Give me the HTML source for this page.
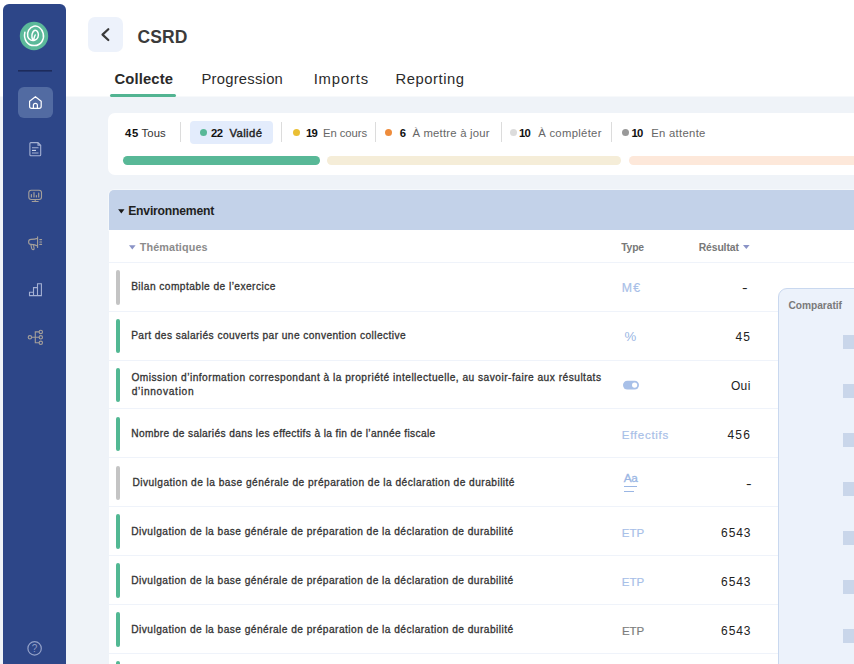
<!DOCTYPE html><html lang="fr"><head><meta charset="utf-8"><title>CSRD</title><style>
*{box-sizing:border-box;margin:0;padding:0}
html,body{width:854px;height:664px;overflow:hidden}
body{background:#eff3f8;font-family:"Liberation Sans",sans-serif;position:relative;color:#333}
.abs{position:absolute}
.t{position:absolute;white-space:nowrap;line-height:1}
#hdr{left:0;top:0;width:854px;height:97px;background:linear-gradient(#fff 96px,#f7f9fb 96px)}
#side{left:3px;top:4px;width:63px;height:670px;background:#2d4688;border-radius:6px}
#back{left:88px;top:17px;width:34.5px;height:34.5px;border-radius:7px;background:#edf2fb}
#ul{left:109.5px;top:93.5px;width:66.5px;height:3px;border-radius:2px;background:#52b492}
#card{left:108.3px;top:113.2px;width:760px;height:61.8px;border-radius:7px;background:#fff}
.sep{width:1px;top:122px;height:19.5px;background:#dcdcdc}
.dot{width:7px;height:7px;border-radius:50%;top:129px}
.bar{top:155.8px;height:8.8px;border-radius:4.4px}
#sec{left:109px;top:190px;width:760px;height:39.8px;background:#c3d2e9;border-radius:5px 0 0 0;box-shadow:0 0 0 1px rgba(255,255,255,.4)}
#tbl{left:108.5px;top:230px;width:760px;height:440px;background:#fff}
.row{position:absolute;left:108.5px;width:760px;height:49px;border-top:1px solid #eff3fa}
.lb{position:absolute;left:116px;width:3.8px;height:34.6px;border-radius:2px}
#cmp{left:778.3px;top:288px;width:90px;height:400px;background:#ecf2fb;border:1px solid #c9d8ef;border-radius:9px 0 0 0}
.sq{left:842.5px;width:14px;height:14px;background:#c9d6ea}
</style></head><body>
<div id="hdr" class="abs"></div>
<div id="side" class="abs"></div>
<svg class="abs" style="left:0;top:0" width="70" height="664" viewBox="0 0 70 664" fill="none">
<circle cx="34" cy="36" r="14.2" fill="#5bb99a"/>
<path d="M24.9 32.2C23.2 39.5 27.5 45.8 34.5 45.6C41 45.4 44.6 39.5 43.2 33.5C41.9 28 37.6 25.4 33.8 26.2C29.5 27.1 26.6 32.5 27.7 36.5C28.6 39.7 31.8 41 34.6 40.2C37.6 39.3 39.2 36.3 38.1 33C37.3 30.7 35.6 29.8 34.4 30.5C32.5 31.6 31.5 35 32 37.5C32.3 39 32.9 39.9 33.6 40.2C33.9 38.2 34.4 36.4 35.2 35" stroke="#fff" stroke-width="1.5" stroke-linecap="round" stroke-linejoin="round"/>
<rect x="18" y="70" width="34" height="1.6" fill="#1d2b5b"/>
<rect x="18" y="87" width="35" height="31" rx="6" fill="#526ba2"/>
<path d="M29.6 101.2L35.4 96.7L41.2 101.2V106.2Q41.2 108.3 39.1 108.3H31.7Q29.6 108.3 29.6 106.2Z M33.4 108.3V105.3Q33.4 103.3 35.4 103.3Q37.4 103.3 37.4 105.3V108.3" stroke="#fff" stroke-width="1.2" stroke-linejoin="round"/>
<g stroke="#a5b1d3" stroke-width="1.1">
<path d="M29.9 143.6Q29.9 142.6 30.9 142.6H38L40.7 145.3V154.7Q40.7 155.7 39.7 155.7H30.9Q29.9 155.7 29.9 154.7Z M38 142.6V145.3H40.7"/>
<path d="M32 147.8H38.5M32 153H38.5"/><path d="M32 150.4H36" stroke="#d5dcee"/>
<path d="M29.5 292.3H33.5V295.6H29.5Z M33.5 287.6H37.5V295.6H33.5Z M37.5 283.7H41.4V295.6H37.5Z"/>
</g>
<g stroke="#a49f9a" stroke-width="1.1" stroke-linecap="round">
<rect x="28.8" y="190.2" width="12.7" height="9.3" rx="2.4"/><path d="M35.2 199.5V201.5M32.2 201.5H38.2"/>
<path d="M31.4 194.5V197M34 192.6V197M36.4 195.6V197M38.7 193.2V197" stroke-width="1.2"/>
<path d="M37.6 236.8V247.4M37.6 238.2C35.5 239.2 33.5 239.4 31 239.4Q28.6 239.4 28.6 241.9Q28.6 244.4 31 244.4C33.5 244.4 35.5 244.6 37.6 246M30.8 244.6L31.8 248.6Q32.2 249.8 33.3 249.6Q34.4 249.3 34.1 248.1L33.3 244.6M39.8 239.6H41.6M39.8 242H41.6M39.8 244.4H41.6"/>
<circle cx="29.9" cy="337.3" r="1.7"/><circle cx="40.8" cy="331.9" r="1.7"/><circle cx="40.8" cy="337.3" r="1.7"/><circle cx="40.8" cy="342.8" r="1.7"/>
<path d="M31.6 337.3H39.1M39.1 331.9H35.3V342.8H39.1"/>
</g>
<circle cx="34.6" cy="648.4" r="6.7" stroke="#94a2c9" stroke-width="1.2"/>
</svg>

<span class="t" style="left:31.7px;top:643.6px;font-size:10px;color:#8d9bc4">?</span>
<div id="back" class="abs"></div>
<svg class="abs" style="left:88px;top:17px" width="35" height="35" viewBox="0 0 35 35" fill="none"><path d="M20.3 12.2L14.5 17.6L20.3 23" stroke="#3a3a3a" stroke-width="2.2" stroke-linecap="round" stroke-linejoin="round"/></svg>
<span id="t1" class="t" style="left:137.40px;top:29px;font-size:17.5px;font-weight:700;color:#3b3b3b;letter-spacing:0.167px;">CSRD</span>
<span id="t2" class="t" style="left:114.40px;top:72px;font-size:14.8px;font-weight:700;color:#2a2a2a;letter-spacing:0.143px;">Collecte</span>
<span id="t3" class="t" style="left:201.40px;top:72px;font-size:14.8px;color:#2b2b2b;letter-spacing:0.250px;">Progression</span>
<span id="t4" class="t" style="left:313.65px;top:72px;font-size:14.8px;color:#2b2b2b;letter-spacing:0.867px;">Imports</span>
<span id="t5" class="t" style="left:395.40px;top:72px;font-size:14.8px;color:#2b2b2b;letter-spacing:0.562px;">Reporting</span>
<div id="ul" class="abs"></div>
<div id="card" class="abs"></div>
<div class="abs" style="left:190px;top:120.8px;width:82.5px;height:23.7px;border-radius:4px;background:#e3ecfc"></div>
<span id="t6" class="t" style="left:124.90px;top:128px;font-size:11.3px;font-weight:700;color:#111;letter-spacing:0.750px;">45</span>
<span id="t7" class="t" style="left:141.40px;top:128px;font-size:11.3px;color:#333;letter-spacing:0.167px;">Tous</span>
<div class="abs sep" style="left:180px"></div>
<div class="abs sep" style="left:281.3px"></div>
<div class="abs sep" style="left:374.8px"></div>
<div class="abs sep" style="left:500.8px"></div>
<div class="abs sep" style="left:610.8px"></div>
<div class="abs dot" style="left:200.3px;background:#58b897"></div>
<div class="abs dot" style="left:293.4px;background:#eabf34"></div>
<div class="abs dot" style="left:385.2px;background:#ee8c3c"></div>
<div class="abs dot" style="left:509.7px;background:#dcdcdc"></div>
<div class="abs dot" style="left:621.7px;background:#999"></div>
<span id="t8" class="t" style="left:210.90px;top:128px;font-size:11.3px;font-weight:700;color:#111;letter-spacing:-0.500px;">22</span>
<span id="t9" class="t" style="left:229.40px;top:128px;font-size:11.3px;color:#222;letter-spacing:0.400px;-webkit-text-stroke:.4px #222;">Validé</span>
<span id="t10" class="t" style="left:305.90px;top:128px;font-size:11.3px;font-weight:700;color:#111;letter-spacing:-0.550px;">19</span>
<span id="t11" class="t" style="left:322.90px;top:128px;font-size:11.3px;color:#666;letter-spacing:-0.036px;">En cours</span>
<span id="t12" class="t" style="left:399.65px;top:128px;font-size:11.3px;font-weight:700;color:#111;">6</span>
<span id="t13" class="t" style="left:412.40px;top:128px;font-size:11.3px;color:#666;letter-spacing:0.214px;">À mettre à jour</span>
<span id="t14" class="t" style="left:518.90px;top:128px;font-size:11.3px;font-weight:700;color:#111;letter-spacing:-0.550px;">10</span>
<span id="t15" class="t" style="left:538.15px;top:128px;font-size:11.3px;color:#666;letter-spacing:0.300px;">À compléter</span>
<span id="t16" class="t" style="left:631.40px;top:128px;font-size:11.3px;font-weight:700;color:#111;letter-spacing:-0.550px;">10</span>
<span id="t17" class="t" style="left:651.15px;top:128px;font-size:11.3px;color:#666;letter-spacing:0.306px;">En attente</span>
<div class="abs bar" style="left:123.2px;width:197.3px;background:#58b897"></div>
<div class="abs bar" style="left:327px;width:294.3px;background:#f5edd8"></div>
<div class="abs bar" style="left:629px;width:260px;background:#fde8da"></div>
<div id="sec" class="abs"></div>
<svg class="abs" style="left:118px;top:208.5px" width="8" height="6"><path d="M0.1 0.2H6.5L3.3 4.4Z" fill="#1a1a1a"/></svg>
<span id="t18" class="t" style="left:128.20px;top:205px;font-size:12.2px;font-weight:700;color:#1f1f1f;letter-spacing:-0.217px;">Environnement</span>
<div id="tbl" class="abs"></div>
<svg class="abs" style="left:128.5px;top:245px" width="8" height="6"><path d="M0 0.2H6.6L3.3 4.4Z" fill="#8a93c6"/></svg>
<span id="t19" class="t" style="left:139.75px;top:242px;font-size:10.8px;font-weight:700;color:#8b8b8b;letter-spacing:0.120px;">Thématiques</span>
<span id="t20" class="t" style="left:621.15px;top:243px;font-size:10.4px;font-weight:700;color:#787878;letter-spacing:-0.167px;">Type</span>
<span id="t21" class="t" style="left:698.65px;top:243px;font-size:10.4px;font-weight:700;color:#787878;letter-spacing:-0.107px;">Résultat</span>
<svg class="abs" style="left:743px;top:245.4px" width="8" height="6"><path d="M0 0.1H6.6L3.3 4.1Z" fill="#8a93c6"/></svg>
<div class="row" style="top:261.80px"></div><div class="lb" style="top:270.00px;background:#c4c4c4"></div>
<span id="t22" class="t" style="left:131.15px;top:282px;font-size:10.2px;color:#333;letter-spacing:0.438px;-webkit-text-stroke:.3px #333;">Bilan comptable de l’exercice</span>
<span id="t23" class="t" style="left:621.77px;top:282px;font-size:12.3px;color:#a8c0e8;letter-spacing:1.200px;-webkit-text-stroke:.2px #a8c0e8;">M€</span>
<span id="t24" class="t" style="left:741.90px;top:282px;font-size:12px;color:#222;transform:scaleX(1.4);transform-origin:0 0;">-</span>
<div class="row" style="top:310.67px"></div><div class="lb" style="top:318.88px;background:#52b893"></div>
<span id="t25" class="t" style="left:131.15px;top:331px;font-size:10.2px;color:#333;letter-spacing:0.419px;-webkit-text-stroke:.3px #333;">Part des salariés couverts par une convention collective</span>
<span id="t26" class="t" style="left:624.45px;top:330px;font-size:13.2px;color:#9bb7e4;">%</span>
<span id="t27" class="t" style="left:735.60px;top:331px;font-size:12px;color:#222;letter-spacing:0.950px;">45</span>
<div class="row" style="top:359.54px"></div><div class="lb" style="top:367.75px;background:#52b893"></div>
<span id="t28" class="t" style="left:131.45px;top:373px;font-size:10.2px;color:#333;letter-spacing:0.479px;-webkit-text-stroke:.3px #333;">Omission d’information correspondant à la propriété intellectuelle, au savoir-faire aux résultats</span>
<span id="t29" class="t" style="left:131.65px;top:387px;font-size:10.2px;color:#333;letter-spacing:0.691px;-webkit-text-stroke:.3px #333;">d’innovation</span>
<svg class="abs" style="left:622px;top:379px" width="18" height="12"><rect x="1" y="1.8" width="16" height="8.6" rx="4.3" fill="#a8c0e8"/><circle cx="12.6" cy="6.1" r="2.6" fill="#fff"/></svg>
<span id="t30" class="t" style="left:730.90px;top:380px;font-size:12px;color:#222;letter-spacing:0.375px;">Oui</span>
<div class="row" style="top:408.41px"></div><div class="lb" style="top:416.62px;background:#52b893"></div>
<span id="t31" class="t" style="left:131.20px;top:429px;font-size:10.2px;color:#333;letter-spacing:0.357px;-webkit-text-stroke:.3px #333;">Nombre de salariés dans les effectifs à la fin de l’année fiscale</span>
<span id="t32" class="t" style="left:621.75px;top:430px;font-size:11.5px;color:#a8c0e8;letter-spacing:0.731px;-webkit-text-stroke:.2px #a8c0e8;">Effectifs</span>
<span id="t33" class="t" style="left:727.43px;top:429px;font-size:12px;color:#222;letter-spacing:1.200px;">456</span>
<div class="row" style="top:457.28px"></div><div class="lb" style="top:465.50px;background:#c4c4c4"></div>
<span id="t34" class="t" style="left:132.40px;top:478px;font-size:10.2px;color:#333;letter-spacing:0.454px;-webkit-text-stroke:.3px #333;">Divulgation de la base générale de préparation de la déclaration de durabilité</span>
<span id="t35" class="t" style="left:623.83px;top:473px;font-size:11.8px;color:#9ab6e4;letter-spacing:-0.550px;-webkit-text-stroke:.3px #9ab6e4;">Aa</span>
<div class="abs" style="left:624.2px;top:485.8px;width:13.3px;height:1.4px;background:#9ab6e4"></div>
<div class="abs" style="left:624.2px;top:491.1px;width:9.8px;height:1.4px;background:#9ab6e4"></div>
<span id="t36" class="t" style="left:746.40px;top:478px;font-size:12px;color:#222;transform:scaleX(1.4);transform-origin:0 0;">-</span>
<div class="row" style="top:506.15px"></div><div class="lb" style="top:514.38px;background:#52b893"></div>
<span id="t37" class="t" style="left:131.25px;top:527px;font-size:10.2px;color:#333;letter-spacing:0.451px;-webkit-text-stroke:.3px #333;">Divulgation de la base générale de préparation de la déclaration de durabilité</span>
<span id="t38" class="t" style="left:621.75px;top:528px;font-size:11.5px;color:#a8c0e8;letter-spacing:0.025px;-webkit-text-stroke:.2px #a8c0e8;">ETP</span>
<span id="t39" class="t" style="left:721.10px;top:527px;font-size:12px;color:#222;letter-spacing:0.883px;">6543</span>
<div class="row" style="top:555.02px"></div><div class="lb" style="top:563.25px;background:#52b893"></div>
<span id="t40" class="t" style="left:131.25px;top:576px;font-size:10.2px;color:#333;letter-spacing:0.451px;-webkit-text-stroke:.3px #333;">Divulgation de la base générale de préparation de la déclaration de durabilité</span>
<span id="t41" class="t" style="left:621.75px;top:577px;font-size:11.5px;color:#a8c0e8;letter-spacing:0.025px;-webkit-text-stroke:.2px #a8c0e8;">ETP</span>
<span id="t42" class="t" style="left:721.10px;top:576px;font-size:12px;color:#222;letter-spacing:0.883px;">6543</span>
<div class="row" style="top:603.89px"></div><div class="lb" style="top:612.12px;background:#52b893"></div>
<span id="t43" class="t" style="left:131.25px;top:625px;font-size:10.2px;color:#333;letter-spacing:0.451px;-webkit-text-stroke:.3px #333;">Divulgation de la base générale de préparation de la déclaration de durabilité</span>
<span id="t44" class="t" style="left:622.00px;top:626px;font-size:11.5px;color:#7d7d7d;letter-spacing:-0.100px;-webkit-text-stroke:.2px #7d7d7d;">ETP</span>
<span id="t45" class="t" style="left:721.10px;top:625px;font-size:12px;color:#222;letter-spacing:0.883px;">6543</span>
<div class="row" style="top:652.76px"></div><div class="lb" style="top:661.00px;background:#52b893"></div>
<div id="cmp" class="abs"></div>
<span id="t46" class="t" style="left:788.50px;top:301px;font-size:10.2px;font-weight:700;color:#7a7a7a;letter-spacing:-0.033px;">Comparatif</span>
<div class="abs sq" style="top:335px"></div>
<div class="abs sq" style="top:384px"></div>
<div class="abs sq" style="top:433px"></div>
<div class="abs sq" style="top:482px"></div>
<div class="abs sq" style="top:531px"></div>
<div class="abs sq" style="top:580px"></div>
<div class="abs sq" style="top:629px"></div>
</body></html>
